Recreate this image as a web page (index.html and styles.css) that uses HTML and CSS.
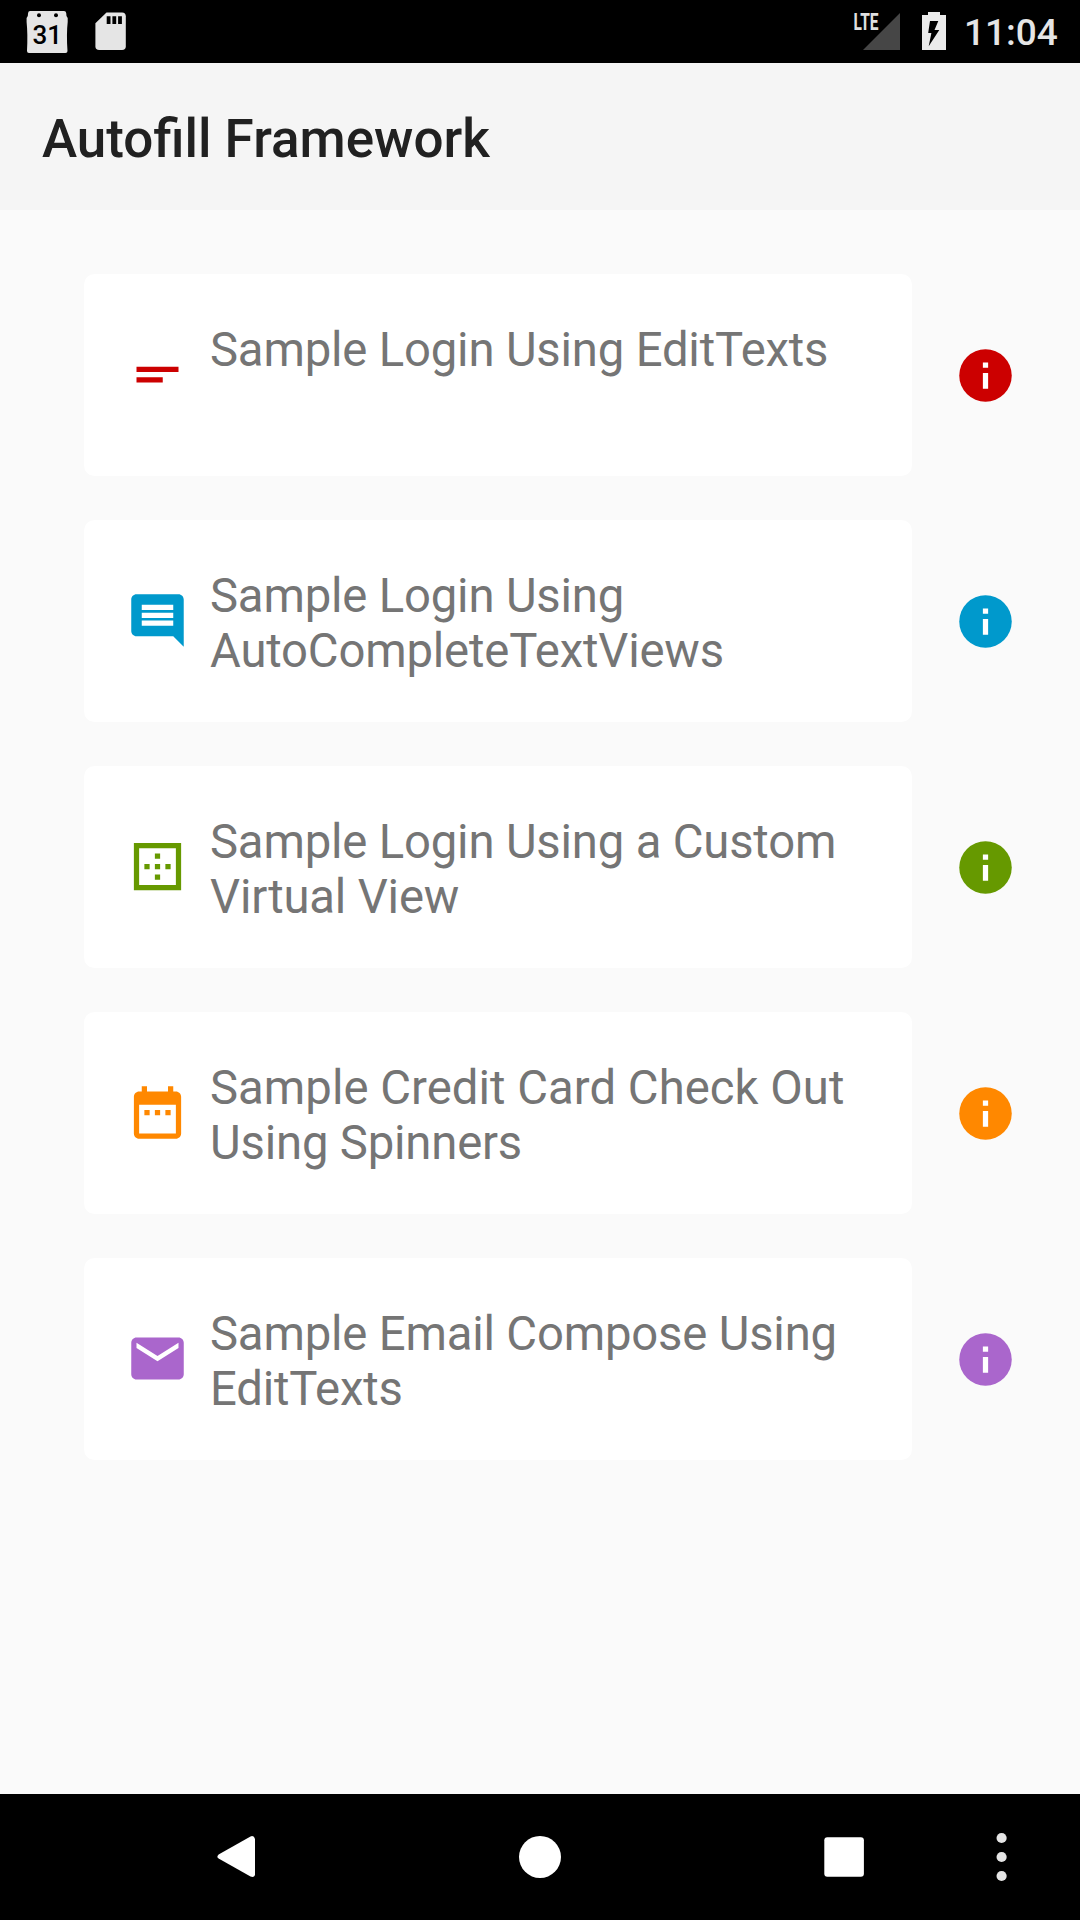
FILE: index.html
```html
<!DOCTYPE html>
<html lang="en">
<head>
<meta charset="utf-8">
<title>Autofill Framework</title>
<link rel="stylesheet" href="styles.css">
</head>
<body>
<div class="screen">
  <header class="status-bar">
    <div class="status-group">
      <svg class="calendar" viewBox="0 0 42 44" aria-hidden="true">
        <path fill="#e5e5e5" d="M4 1h34q2 0 2.200 2l.3 3 1.200 2v4q-1.400 12-.2 29 0 2-2 2H3q-2 0-2-2 .900-17-.4-29V8l1.200-2 .3-3Q2.300 1 4 1z"/>
        <circle cx="13" cy="5.300" r="2"/><circle cx="30" cy="5.300" r="2"/>
        <text class="calendar-day" x="21.300" y="34" text-anchor="middle">31</text>
      </svg>
      <svg class="sd-card" viewBox="0 0 31 39" aria-hidden="true">
        <path fill="#e5e5e5" d="M11.500.5H27q3.800 0 3.800 3.800v30q0 3.800-3.800 3.800H4.200Q.4 38.100.4 34.300v-23z"/>
        <path d="M11.700 4.200h3.800V12h-3.800zM17.400 4.200h3.800V12h-3.800zM23.100 4.200h3.800V12h-3.800z"/>
      </svg>
    </div>
    <div class="status-group">
      <div class="signal">
        <svg class="signal-strength" viewBox="0 0 37 37" aria-hidden="true"><path fill="#464646" d="M37 0v37H0z"/></svg>
        <svg class="network-badge" viewBox="0 0 28 28">
          <text class="network" x="1.500" y="22" textLength="25" lengthAdjust="spacingAndGlyphs">LTE</text>
        </svg>
      </div>
      <svg class="battery" viewBox="0 0 24 38" aria-hidden="true">
        <path fill="#ebebeb" d="M6 0h12v3h6v35H0V3h6z"/>
        <path d="M8 9h8.300L12.500 18h4.800L6.700 34.300 9.400 21H6.200z"/>
      </svg>
      <span class="clock">11:04</span>
    </div>
  </header>

  <div class="app-bar"><h1 class="app-title">Autofill Framework</h1></div>

  <main class="samples">
    <div class="sample red">
      <div class="card">
        <svg class="icon" viewBox="0 0 24 24"><path d="M4 9h16v2H4zM4 13h10v2H4z"/></svg>
        <span class="label">Sample Login Using EditTexts</span>
      </div>
      <svg class="info" viewBox="0 0 24 24"><circle class="info-disc" cx="12" cy="12" r="10"/><path class="info-mark" d="M11 11h2v6h-2zM11 7h2v2h-2z"/></svg>
    </div>
    <div class="sample blue">
      <div class="card">
        <svg class="icon" viewBox="0 0 24 24"><path d="M21.990 4c0-1.100-.890-2-1.990-2H4c-1.100 0-2 .9-2 2v12c0 1.100.9 2 2 2h14l4 4-.010-18zM18 14H6v-2h12v2zm0-3H6V9h12v2zm0-3H6V6h12v2z"/></svg>
        <span class="label">Sample Login Using AutoCompleteTextViews</span>
      </div>
      <svg class="info" viewBox="0 0 24 24"><circle class="info-disc" cx="12" cy="12" r="10"/><path class="info-mark" d="M11 11h2v6h-2zM11 7h2v2h-2z"/></svg>
    </div>
    <div class="sample green">
      <div class="card">
        <svg class="icon" viewBox="0 0 24 24"><path d="M13 7h-2v2h2V7zm0 4h-2v2h2v-2zm4 0h-2v2h2v-2zM3 3v18h18V3H3zm16 16H5V5h14v14zm-6-4h-2v2h2v-2zm-4-4H7v2h2v-2z"/></svg>
        <span class="label">Sample Login Using a Custom Virtual View</span>
      </div>
      <svg class="info" viewBox="0 0 24 24"><circle class="info-disc" cx="12" cy="12" r="10"/><path class="info-mark" d="M11 11h2v6h-2zM11 7h2v2h-2z"/></svg>
    </div>
    <div class="sample orange">
      <div class="card">
        <svg class="icon" viewBox="0 0 24 24"><path d="M9 11H7v2h2v-2zm4 0h-2v2h2v-2zm4 0h-2v2h2v-2zm2-7h-1V2h-2v2H8V2H6v2H5c-1.110 0-1.990.9-1.990 2L3 20c0 1.100.890 2 2 2h14c1.100 0 2-.9 2-2V6c0-1.100-.9-2-2-2zm0 16H5V9h14v11z"/></svg>
        <span class="label">Sample Credit Card Check Out Using Spinners</span>
      </div>
      <svg class="info" viewBox="0 0 24 24"><circle class="info-disc" cx="12" cy="12" r="10"/><path class="info-mark" d="M11 11h2v6h-2zM11 7h2v2h-2z"/></svg>
    </div>
    <div class="sample purple">
      <div class="card">
        <svg class="icon" viewBox="0 0 24 24"><path d="M20 4H4c-1.100 0-1.990.9-1.990 2L2 18c0 1.100.9 2 2 2h16c1.100 0 2-.9 2-2V6c0-1.100-.9-2-2-2zm0 4l-8 5-8-5V6l8 5 8-5v2z"/></svg>
        <span class="label">Sample Email Compose Using EditTexts</span>
      </div>
      <svg class="info" viewBox="0 0 24 24"><circle class="info-disc" cx="12" cy="12" r="10"/><path class="info-mark" d="M11 11h2v6h-2zM11 7h2v2h-2z"/></svg>
    </div>
  </main>

  <nav class="nav-bar">
    <svg class="nav-icon" viewBox="0 0 84 84"><path d="M60 24v36q-1 3-4.500 1.600L23.600 43.600q-2.500-1.600 0-4L55.500 21.400Q59 20 60 24z"/></svg>
    <svg class="nav-icon" viewBox="0 0 84 84"><circle cx="42" cy="42" r="21"/></svg>
    <svg class="nav-icon" viewBox="0 0 84 84"><rect x="22.300" y="22.200" width="39.600" height="39.600" rx="3"/></svg>
    <svg class="nav-icon nav-menu" viewBox="0 0 84 84"><circle cx="41.600" cy="23" r="5.100"/><circle cx="41.600" cy="42" r="5.100"/><circle cx="41.600" cy="61" r="5.100"/></svg>
  </nav>
</div>
</body>
</html>
```
FILE: styles.css
```css
* {
  box-sizing: border-box;
}

body {
  margin: 0;
  font-family: Roboto, "Liberation Sans", sans-serif;
}

svg {
  display: block;
  flex: none;
}

.screen {
  display: flex;
  flex-direction: column;
  width: 1080px;
  height: 1920px;
  background: #fafafa;
}

.status-bar {
  display: flex;
  justify-content: space-between;
  height: 63px;
  padding: 0 0 0 26px;
  background: #000;
}

.status-group {
  display: flex;
  align-items: flex-start;
}

.calendar {
  width: 42px;
  height: 44px;
  margin-top: 10px;
}

.calendar-day {
  font-size: 26px;
  font-weight: 500;
}

.sd-card {
  width: 31px;
  height: 39px;
  margin: 12px 0 0 27px;
}

.signal {
  position: relative;
  width: 46px;
  margin-top: 13px;
}

.signal-strength {
  width: 37px;
  height: 37px;
  margin-left: 9px;
}

/* The network type sits over the corner of the signal triangle. */
.network-badge {
  position: absolute;
  top: -5px;
  left: -2px;
  width: 28px;
  height: 28px;
  overflow: visible;
}

.network {
  font-size: 23.400px;
  font-weight: 700;
  fill: #e0e0e0;
}

.battery {
  width: 24px;
  height: 38px;
  margin: 12px 0 0 22px;
}

.clock {
  width: 134px;
  padding-left: 18px;
  font-size: 37px;
  font-weight: 500;
  line-height: 44px;
  margin-top: 11px;
  color: #e5e5e5;
}

.app-bar {
  display: flex;
  align-items: center;
  height: 147px;
  padding: 5px 42px 0;
  background: #f5f5f5;
}

.app-title {
  margin: 0;
  font-size: 53px;
  font-weight: 500;
  line-height: 62px;
  color: #212121;
}

.samples {
  display: flex;
  flex: 1;
  flex-direction: column;
  gap: 44px;
  padding: 64px 63px 0 84px;
}

.sample {
  display: flex;
  justify-content: space-between;
  height: 202px;
}

.card {
  display: flex;
  gap: 21px;
  width: 828px;
  padding: 0 42px;
  border-radius: 10.500px;
  background: #fff;
}

.icon,
.info {
  width: 63px;
  height: 63px;
}

.icon {
  margin-top: 69px;
  fill: currentColor;
}

.info {
  margin-top: 70px;
}

.info-disc {
  fill: currentColor;
}

.info-mark {
  fill: #fff;
}

.label {
  flex: 1;
  margin-top: 49px;
  font-size: 47.250px;
  line-height: 55px;
  letter-spacing: -0.180px;
  color: #757575;
}

.orange .label::first-line {
  letter-spacing: 0.040px;
}

.red { color: #c00; }
.blue { color: #09c; }
.green { color: #690; }
.orange { color: #f80; }
.purple { color: #a6c; }

.nav-bar {
  display: grid;
  grid-template-columns: 303px 304px 158px 84px;
  align-items: center;
  height: 126px;
  padding-left: 195px;
  background: #000;
}

.nav-icon {
  width: 84px;
  height: 84px;
  fill: #fff;
}

.nav-menu {
  fill: #e5e5e5;
}
```
